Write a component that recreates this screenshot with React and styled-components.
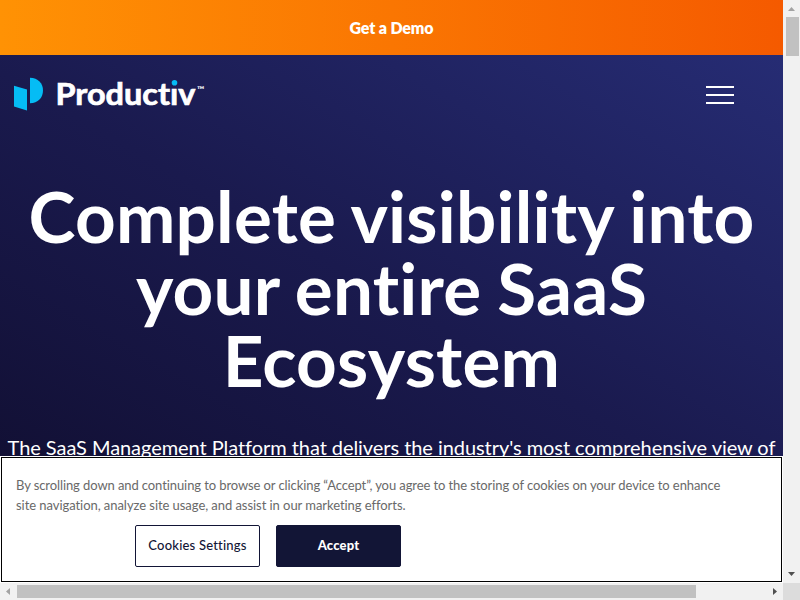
import React from "react";
import styled, { createGlobalStyle } from "styled-components";

const GlobalStyle = createGlobalStyle`
    *{
        box-sizing: border-box;
    }
    body{
        margin: 0;
        overflow: hidden;
        font-family: "Lato", sans-serif;
        font-variant-ligatures: none;
    }
`
const Window = styled.div`
    display: grid;
    grid-template-columns: 783px 17px;
    grid-template-rows: 583px 17px;
    width: 800px;
    height: 600px;
    background-color: #f1f1f1;
`
const Page = styled.div`
    display: flex;
    flex-direction: column;
    overflow: hidden;
    height: 583px;
`
const TopBar = styled.a`
    display: flex;
    flex: none;
    align-items: center;
    justify-content: center;
    height: 55px;
    padding-bottom: 1px;
    background: linear-gradient(90deg, #ff9204 0%, #f55a00 100%);
    color: white;
    font-size: 16px;
    font-weight: 800;
    letter-spacing: -0.15px;
`
const Hero = styled.div`
    display: flex;
    flex: none;
    flex-direction: column;
    height: 401px;
    background: linear-gradient(30deg, #121035 0%, #1a1a4e 45%, #262c74 100%);
    color: white;
`
const Header = styled.header`
    display: flex;
    flex: none;
    justify-content: space-between;
    height: 80px;
    padding: 17px 49px 0 10px;
`
const Logo = styled.svg`
    width: 200px;
    height: 44px;
`
const MenuButton = styled.button`
    display: flex;
    flex-direction: column;
    justify-content: space-between;
    width: 28px;
    height: 18px;
    margin-top: 14px;
    padding: 0;
    border: 0;
    background: none;
    span{
        height: 2px;
        background-color: white;
    }
`
const Title = styled.h1`
    flex: none;
    width: 783px;
    margin: 45px 0 0;
    padding: 0 20px;
    font-size: 71px;
    font-weight: 700;
    line-height: 72px;
    letter-spacing: 0.2px;
    word-spacing: -1.5px;
    text-align: center;
`
const Subtitle = styled.p`
    flex: none;
    margin: 35px 0 0;
    font-size: 20px;
    line-height: 32px;
    letter-spacing: -0.06px;
    text-align: center;
    white-space: nowrap;
`
const CookieBanner = styled.div`
    position: relative;
    flex: none;
    height: 127px;
    padding: 1px;
    background-color: white;
`
const CookieContent = styled.div`
    height: 125px;
    padding: 17px 14px 0;
    border: 1px solid black;
`
const CookieText = styled.p`
    margin: 0;
    color: #696969;
    font-size: 13px;
    line-height: 20px;
    letter-spacing: ${props => props.$spacing};
    white-space: nowrap;
`
const CookieButtons = styled.div`
    display: flex;
    gap: 16px;
    margin: 10px 0 0 119px;
`
const CookieButton = styled.button`
    width: 125px;
    height: 42px;
    padding: 0 0 2px;
    border: 1px solid #121536;
    border-radius: 2px;
    background-color: ${props => props.$filled ? "#121536" : "white"};
    color: ${props => props.$filled ? "white" : "#121536"};
    font-family: "Lato", sans-serif;
    font-size: 13px;
    font-weight: ${props => props.$filled ? 900 : 500};
    letter-spacing: 0.2px;
`
const VerticalBar = styled.div`
    display: flex;
    flex-direction: column;
    align-items: center;
    padding-left: 1px;
`
const HorizontalBar = styled.div`
    display: flex;
    align-items: center;
`
const Arrow = styled.svg`
    flex: none;
    width: 17px;
    height: 17px;
`
const VerticalThumb = styled.div`
    width: 13px;
    height: 39px;
    margin-bottom: auto;
    background-color: #c1c1c1;
`
const HorizontalThumb = styled.div`
    width: 679px;
    height: 13px;
    margin-right: auto;
    background-color: #c1c1c1;
`
const Corner = styled.div`
    background-color: #dcdcdc;
`

const ProductivLogo = () => (
    <Logo viewBox="0 0 200 44">
        <path d="M4 13.8 L17 17.6 V38.5 L4 34.5 Z" fill="#05bcf5" />
        <path d="M20 5.8 C28 5.8 33 11.4 33 18.5 C33 25.6 28 31.2 20 31.2 Z" fill="#05bcf5" />
        <text
            x="45.5" y="33" fill="white" fontFamily="Lato" fontSize="31" fontWeight="700"
            stroke="white" strokeWidth="0.7" textLength="140" lengthAdjust="spacingAndGlyphs"
        >Productıv</text>
        <circle cx="164.5" cy="10.8" r="2.8" fill="#05bcf5" />
        <text x="187" y="21" fill="white" fontFamily="Lato" fontSize="9.5" fontWeight="700">™</text>
    </Logo>
)

export default class App extends React.Component{
    render (){
        return (
            <>
                <GlobalStyle />
                <Window>
                    <Page>
                        <TopBar>Get a Demo</TopBar>
                        <Hero>
                            <Header>
                                <ProductivLogo />
                                <MenuButton aria-label="Menu">
                                    <span />
                                    <span />
                                    <span />
                                </MenuButton>
                            </Header>
                            <Title>Complete visibility into your entire SaaS Ecosystem</Title>
                            <Subtitle>The SaaS Management Platform that delivers the industry's most comprehensive view of</Subtitle>
                        </Hero>
                        <CookieBanner>
                            <CookieContent>
                                <CookieText $spacing="-0.093px">By scrolling down and continuing to browse or clicking “Accept”, you agree to the storing of cookies on your device to enhance</CookieText>
                                <CookieText $spacing="-0.055px">site navigation, analyze site usage, and assist in our marketing efforts.</CookieText>
                                <CookieButtons>
                                    <CookieButton>Cookies Settings</CookieButton>
                                    <CookieButton $filled>Accept</CookieButton>
                                </CookieButtons>
                            </CookieContent>
                        </CookieBanner>
                    </Page>
                    <VerticalBar>
                        <Arrow viewBox="0 0 17 17"><path d="M4 11 L7.5 7 L11 11 Z" fill="#a3a3a3" /></Arrow>
                        <VerticalThumb />
                        <Arrow viewBox="0 0 17 17"><path d="M4 6 H11 L7.5 10 Z" fill="#505050" /></Arrow>
                    </VerticalBar>
                    <HorizontalBar>
                        <Arrow viewBox="0 0 17 17"><path d="M10 5 V12 L6 8.5 Z" fill="#a3a3a3" /></Arrow>
                        <HorizontalThumb />
                        <Arrow viewBox="0 0 17 17"><path d="M7 5 V12 L11 8.5 Z" fill="#505050" /></Arrow>
                    </HorizontalBar>
                    <Corner />
                </Window>
            </>
        )
    }
}
